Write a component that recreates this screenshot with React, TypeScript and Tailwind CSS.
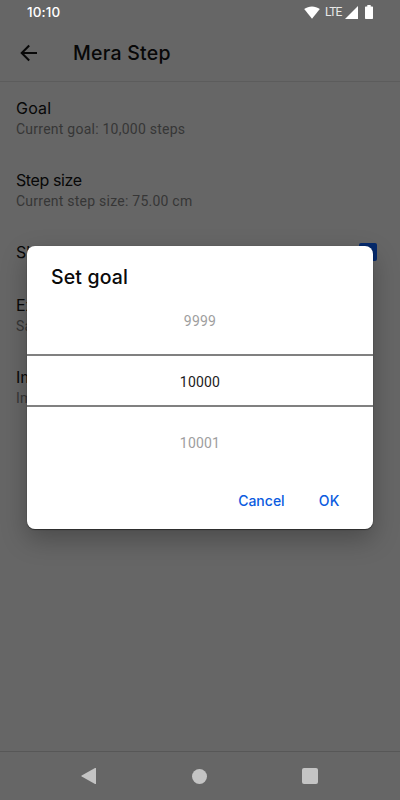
import React from 'react';

const display = "font-['Inter','Liberation_Sans',sans-serif]";
const body = "font-['Roboto','Liberation_Sans',sans-serif]";

function StatusBar() {
  return (
    <div className="flex h-6 items-center justify-between pr-[27px] pl-[27px] text-white">
      <span className={`${display} text-[13.5px] leading-6 font-medium tracking-[0.1px]`}>10:10</span>
      <div className="flex items-center">
        <svg className="h-[13px] w-[16px]" viewBox="0 0 16 13" fill="currentColor">
          <path d="M.2 3.1C4.8-.5 11.2-.5 15.8 3.1L8 12.8Z" />
        </svg>
        <span className={`${body} ml-[5px] w-[18px] text-[12px] leading-6 tracking-[-0.7px] text-[#e8e8e8]`}>LTE</span>
        <svg className="ml-[2px] h-[13px] w-[13px]" viewBox="0 0 13 13" fill="currentColor">
          <path d="M13 0v13H0Z" />
        </svg>
        <svg className="ml-[7px] h-[14px] w-[8px]" viewBox="0 0 8 14" fill="currentColor">
          <path d="M2.3 0h3.4v1.4H7.3Q8 1.4 8 2.1V13.3Q8 14 7.3 14H.7Q0 14 0 13.3V2.1Q0 1.4.7 1.4H2.3Z" />
        </svg>
      </div>
    </div>
  );
}

function Setting({ title, summary, titleClass = '' }: {
  title: string; summary: string; titleClass?: string;
}) {
  return (
    <div className="h-[72px] px-4 pt-[15px] whitespace-nowrap">
      <div className={`${display} text-[16px] leading-[22px] text-[#080808] ${titleClass}`}>{title}</div>
      <div className={`${body} text-[14px] leading-5 tracking-[0.24px] text-[#363636]`}>{summary}</div>
    </div>
  );
}

function GoalDialog() {
  return (
    <div className="absolute top-[246px] left-[27px] flex h-[283px] w-[346px] flex-col overflow-hidden rounded-lg bg-white">
      <h2 className={`${display} pt-[17px] pl-[24px] text-[19.5px] leading-7 font-medium tracking-[0.15px] text-[#0a0a0a]`}>Set goal</h2>
      <div className={`${body} mt-[1px] text-center text-[14px] tracking-[0.2px]`}>
        <div className="h-[62px] pt-[19px] leading-5 text-[#9e9e9e]">9999</div>
        <div className="h-[53px] border-y-2 border-[#808080] pt-[16px] leading-5 text-[#1c1c1c]">10000</div>
        <div className="h-[62px] pt-[26px] leading-5 text-[#9e9e9e]">10001</div>
      </div>
      <div className={`${display} mt-[22px] flex justify-end pr-[33px] text-[14px] leading-5 font-medium text-[#0b5be0]`}>
        <button className="mr-[34px] tracking-[0px]">Cancel</button>
        <button className="tracking-[0.5px]">OK</button>
      </div>
    </div>
  );
}

export default function App() {
  return (
    <div className="relative flex h-[800px] w-[400px] flex-col overflow-hidden bg-[#666]">
      <StatusBar />
      <header className="flex h-[58px] items-center border-b border-[#5c5c5c] pl-[20px]">
        <svg className="h-[18px] w-[18px]" viewBox="0 0 18 18" fill="none" stroke="#080808" strokeWidth="2">
          <path d="M17 9H2.2M9.2 1.5 1.7 9l7.5 7.5" />
        </svg>
        <h1 className={`${display} ml-[35px] text-[19.5px] leading-7 font-medium tracking-[0.25px] text-[#080808]`}>Mera Step</h1>
      </header>
      <main className="flex-1">
        <Setting title="Goal" summary="Current goal: 10,000 steps" titleClass="tracking-[0.2px]" />
        <Setting title="Step size" summary="Current step size: 75.00 cm" titleClass="tracking-[-0.4px]" />
        <div className="flex h-[53px] items-center justify-between pr-[23px] pb-[1px] pl-4">
          <span className={`${display} text-[16px] text-[#080808]`}>Sh</span>
          <span className="h-[18px] w-[18px] rounded-[2px] bg-[#062a6c]" />
        </div>
        <Setting title="Ex" summary="Sa" />
        <Setting title="Im" summary="Im" />
      </main>
      <nav className="flex h-[49px] items-center border-t border-[#575757] text-[#c4c4c4]">
        <svg className="ml-[81px] h-4 w-4" viewBox="0 0 16 16" fill="currentColor"><path d="M.7 7.5 14 0q1-.5 1 .5v15q0 1-1 .5L.7 8.5q-.8-.5 0-1Z" /></svg>
        <span className="ml-[95px] h-[15px] w-[15px] rounded-full bg-[#c4c4c4]" />
        <span className="ml-[95px] h-[16px] w-[16px] rounded-[2px] bg-[#c4c4c4]" />
      </nav>
      <div className="absolute top-[246px] left-[27px] h-[283px] w-[346px] rounded-lg shadow-[0_1px_1px_rgba(0,0,0,0.45),0_0_1px_rgba(0,0,0,0.3),0_10px_26px_rgba(0,0,0,0.27)]" />
      <GoalDialog />
    </div>
  );
}
